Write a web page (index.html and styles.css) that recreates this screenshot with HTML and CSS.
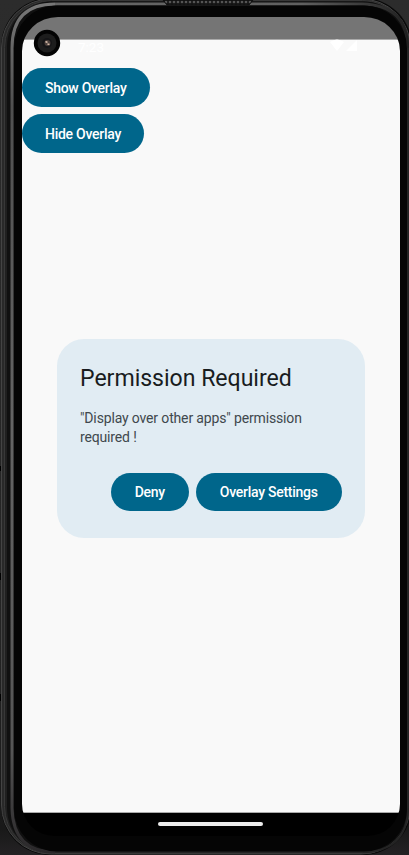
FILE: index.html
```
<!DOCTYPE html>
<html lang="en">
<head>
<meta charset="utf-8">
<title>Overlay permission</title>
<link rel="stylesheet" href="styles.css">
</head>
<body>
<main class="device">
  <svg class="shell" viewBox="0 0 409 855" aria-hidden="true">
    <defs>
      <linearGradient id="rail" x2="0" y2="1"><stop offset="0" stop-color="#777"/><stop offset=".12" stop-color="#505050"/><stop offset=".5" stop-color="#646464"/><stop offset=".88" stop-color="#555"/><stop offset="1" stop-color="#2a282a"/></linearGradient>
      <linearGradient id="edge"><stop offset="0" stop-color="#666"/><stop offset=".7" stop-color="#606060"/><stop offset="1" stop-color="#202020"/></linearGradient>
      <pattern id="mesh" width="4" height="4" patternUnits="userSpaceOnUse"><path fill="#151515" d="M0 0h4v4H0z"/><circle cx="2" cy="2" r="1.3" fill="#555"/></pattern>
    </defs>
    <rect x="1" y="-2" width="411" height="857" rx="49" fill="#090909"/>
    <rect x="1.5" y="-1" width="409" height="855" rx="49" fill="#292929" stroke="#444"/>
    <rect x="4.5" y=".5" width="405" height="853" rx="47" fill="#202020" stroke="#383838"/>
    <rect x="7" y="1.5" width="401.500" height="851.500" rx="45" fill="#101010"/>
    <path d="M55 4Q12 4 12 48V808Q13 852 55 852" fill="none" stroke="url(#rail)" stroke-width="3"/>
    <path d="M55 4H362Q407.500 5 407.500 48" fill="none" stroke="url(#edge)" stroke-width="3"/>
    <path d="M408 48V808Q407 852 362 852H55" fill="none" stroke="#242424" stroke-width="2"/>
    <rect x="14" y="5.500" width="393" height="846" rx="43" fill="#050505"/>
    <path d="M163 0H253L249 5H167Z" fill="url(#mesh)" stroke="#111"/>
    <path d="M0 466v5M0 573v7M0 694v7" stroke="#000" stroke-width="2"/>
  </svg>
  <section class="screen">
    <div class="status">
      <span class="clock">7:23</span>
      <svg class="signals" viewBox="0 0 28 13" aria-hidden="true"><path d="M0 3Q7-2 14 3L7 12ZM16 12L27 1V12Z" fill="#fff"/></svg>
    </div>
    <div class="actions">
      <button class="button show">Show Overlay</button>
      <button class="button hide">Hide Overlay</button>
    </div>
    <div class="dialog">
      <h1>Permission Required</h1>
      <p>"Display over other apps" permission<br>required !</p>
      <div class="choices">
        <button class="button deny">Deny</button>
        <button class="button settings">Overlay Settings</button>
      </div>
    </div>
    <div class="navigation"><span class="handle"></span></div>
  </section>
  <svg class="camera" viewBox="0 0 28 28" aria-hidden="true"><circle cx="14" cy="14" r="13.200" fill="#030303"/><circle cx="14" cy="14" r="9.500" fill="#1d1d1d"/><circle cx="14" cy="14" r="5" fill="#151517"/><circle cx="14.500" cy="14" r="3" fill="#4a3f3b"/><path d="M12.500 12.500l2 1M14.500 15l2 .5" stroke="#d2b7a5" stroke-width="1.500"/></svg>
</main>
</body>
</html>
```

FILE: styles.css
```
* { box-sizing: border-box; }
body { margin: 0; background: #242424; font-family: Roboto, sans-serif; overflow: hidden; }
.device { position: relative; width: 409px; height: 855px; padding: 17px 9px 19px 22px; background: linear-gradient(#2c2c2c, #242424 75%, #191919 97%, #242224); }
.shell { position: absolute; inset: 0; width: 409px; height: 855px; }
.screen { position: relative; height: 819px; display: flex; flex-direction: column; background: linear-gradient(#757575 22px, #aaa 22px, #aaa 23px, #f9f9f9 23px, #f9f9f9 795px, #aaa 795px, #aaa 796px, #000 796px); border-radius: 36px 36px 32px 32px / 34px 34px 32px 32px; overflow: hidden; }
.status { height: 51px; flex: none; display: flex; justify-content: space-between; padding: 22px 42px 0 56px; }
.clock { color: #fff; font-size: 13.5px; line-height: 16px; }
.signals { width: 28px; height: 13px; }
.actions { display: flex; flex-direction: column; align-items: flex-start; gap: 7.5px; height: 271px; flex: none; }
.button { height: 38.5px; flex: none; border: 0; border-radius: 20px; padding: 2px 0 0; background: #00668b; color: #fff; font: 500 14px/19px Roboto, sans-serif; letter-spacing: -.27px; white-space: nowrap; }
.show { width: 127.5px; }
.hide { width: 122px; }
.dialog { width: 308.5px; height: 199.5px; margin: -.5px 0 0 34.5px; flex: none; padding: 24.5px 23.5px 0; border-radius: 27px; background: #e1ecf3; }
h1 { margin: 0; font-size: 23.1px; font-weight: 400; line-height: 31px; letter-spacing: -.03px; color: #191c1e; white-space: nowrap; }
p { margin: 14.5px 0 0; font-size: 14px; line-height: 19px; letter-spacing: -.15px; color: #40484d; white-space: nowrap; }
.choices { display: flex; justify-content: flex-end; gap: 7.5px; margin-top: 26px; }
.choices .button { height: 38px; padding-top: 1px; }
.deny { width: 77.5px; }
.settings { width: 145.5px; }
.navigation { height: 24px; margin-top: auto; flex: none; display: flex; justify-content: center; padding: 10px 1px 0 0; }
.handle { width: 105px; height: 4px; border-radius: 2px; background: #ececec; }
.camera { position: absolute; left: 33px; top: 29px; width: 28px; height: 28px; }
```
